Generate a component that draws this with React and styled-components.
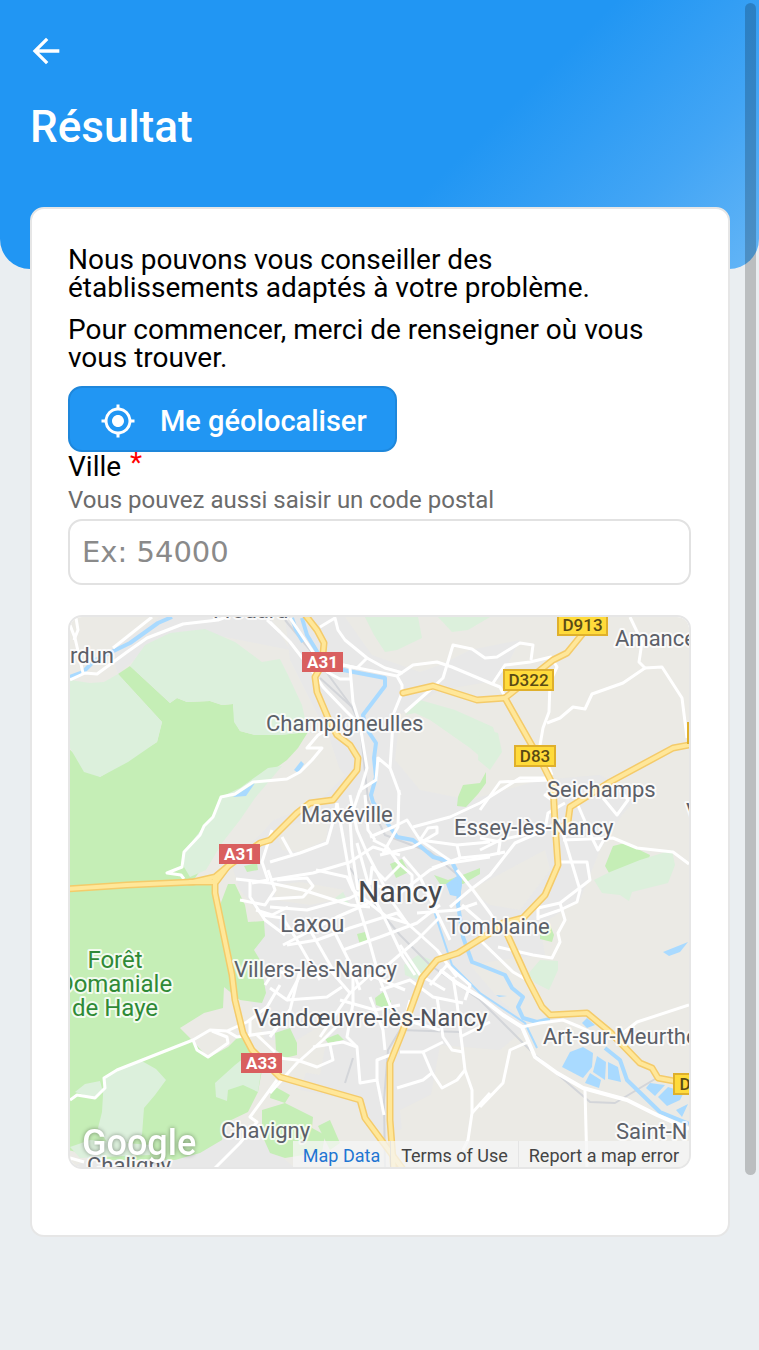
import React, { useState } from "react";
import styled, { createGlobalStyle } from "styled-components";
import { MdArrowBack, MdMyLocation } from "react-icons/md";

const GlobalStyle = createGlobalStyle`
  * {
    box-sizing: border-box;
  }

  body {
    margin: 0;
    min-height: 100vh;
    background: #eaeef1;
    color: #000;
    font-family: Roboto, "Liberation Sans", sans-serif;
    font-size: 28px;
    line-height: 28px;
  }
`;

// Fills, drawn from back to front.
const AREAS = [
  {
    fill: "#e8e8e8",
    shapes: [
      "285,617 345,617 372,655 420,672 440,665 470,650 520,640 500,680 440,690 400,715 395,760 420,790 470,800 540,780 600,775 640,795 622,815 600,850 580,900 540,925 545,955 500,960 470,965 500,1000 530,1025 500,1050 440,1045 430,1100 400,1130 380,1130 350,1100 300,1090 310,1060 290,1040 265,1040 250,1000 255,950 265,920 240,890 230,860 260,835 300,790 340,770 330,740 310,700 290,660",
      "110,650 160,617 270,617 290,650 200,632 140,655 118,674",
      "70,1168 110,1150 250,1130 295,1168",
    ],
  },
  {
    fill: "#ebeae5",
    shapes: [
      "275,830 330,812 326,840 300,852 282,850",
      "470,890 545,850 550,870 520,910 490,905",
      "280,1050 330,1020 320,1075 290,1070",
      "270,780 330,756 345,775 320,800 270,822",
      "275,900 310,905 335,900 345,890 300,882 275,885",
      "400,1110 440,1090 480,1100 460,1150 405,1160",
    ],
  },
  {
    fill: "#c5eeb6",
    shapes: [
      "68,748 100,777 157,742 162,722 118,674 130,666 170,703 177,698 187,702 210,701 222,705 233,704 235,722 240,731 255,735 280,735 308,732 298,748 287,760 276,768 258,777 235,796 215,850 190,885 214,885 220,905 228,884 235,884 245,905 248,922 264,921 265,936 254,950 260,960 266,993 262,1003 240,1000 224,987 223,1008 204,1013 180,1028 193,1041 208,1058 228,1047 240,1035 250,1045 254,1064 262,1070 258,1092 248,1112 225,1123 222,1140 200,1153 175,1160 110,1160 68,1150",
      "262,1110 285,1103 313,1117 312,1128 325,1135 322,1152 285,1158 270,1153 262,1135",
      "318,1126 330,1120 340,1143 330,1150",
      "272,1085 290,1095 285,1103 270,1098",
      "275,1033 290,1028 297,1043 297,1055 285,1058 276,1050",
      "325,1039 338,1034 344,1040 328,1043",
      "375,998 383,992 391,1001 390,1010 376,1005",
      "390,864 402,859 409,872 396,878",
      "434,875 448,880 465,874 480,868 480,874 463,884 440,884",
      "357,934 365,932 368,942 360,945",
      "458,797 463,785 480,783 486,772 486,783 478,794 466,807 457,806",
      "605,866 613,846 625,843 650,855 648,862 633,865 612,878",
      "540,930 550,925 554,935 552,942 540,939",
      "244,866 257,863 258,870 247,872",
    ],
  },
  {
    fill: "#dcf0dc",
    shapes: [
      "70,680 90,683 104,682 118,674 162,722 157,742 128,762 100,777 84,772 70,748",
      "130,666 145,645 170,633 205,629 235,642 262,662 280,659 287,673 302,705 308,732 280,735 255,735 240,731 234,722 233,704 222,705 210,701 187,702 177,698 170,703",
      "184,852 204,826 213,817 221,797 240,788 268,768 282,766 255,798 240,820 222,843 206,870 190,877 184,867",
      "104,1078 140,1060 156,1069 166,1080 155,1095 144,1108 142,1135 112,1150 98,1128 102,1112",
      "75,1092 85,1084 100,1081 103,1092 93,1098",
      "70,1147 90,1140 150,1145 150,1155 80,1158",
      "215,1083 235,1065 245,1057 262,1065 258,1092 243,1085 228,1090 227,1101 216,1097",
      "365,617 418,617 422,638 397,650 385,652 374,635",
      "438,617 490,617 468,630 452,632",
      "405,715 420,700 455,710 493,727 500,750 490,765 470,748 430,720 415,713",
      "480,728 498,733 502,752 490,770 478,760",
      "594,880 610,872 640,860 672,850 675,865 668,883 632,892 629,901 620,895 602,893",
      "528,974 540,960 558,961 558,970 549,990 535,983",
      "404,965 418,955 432,960 422,982 405,975",
      "335,898 343,892 350,905 340,902",
    ],
  },
  {
    fill: "#a9daff",
    shapes: [
      "562,1067 570,1052 583,1047 593,1053 592,1067 583,1078",
      "597,1056 606,1062 605,1080 593,1072",
      "608,1062 618,1067 621,1082 608,1079",
      "590,1073 601,1080 599,1088 585,1083",
      "582,1023 587,1018 595,1025 587,1028",
      "646,1088 650,1083 665,1085 655,1096",
      "658,1097 668,1087 684,1092 680,1100 667,1106",
      "676,1110 688,1104 682,1117",
      "663,952 688,942 680,952 669,956",
      "446,884 460,874 462,885 460,897 450,895",
      "294,770 301,761 304,764 298,773",
      "496,995 507,996 499,997",
      "233,797 255,783 246,796",
    ],
  },
];

const RIVERS = [
  "70,677 83,672 95,660 130,643 158,623 172,617",
  "292,618 296,630 303,642",
  "302,618 307,635 318,653 330,668 343,670 385,678 385,686 363,715 366,728 376,743 374,758 376,777 371,795 373,802 390,827 397,837 413,840 433,857 452,862 460,878 458,905 463,937 472,962 480,965 505,975 512,988 523,997 518,1007 523,1018 537,1022 550,1019",
  "605,1048 620,1060 627,1080 660,1112 689,1124",
];

const CANALS = ["433,908 442,935 452,965 480,993 525,1023 537,1048"];

const RAILS = [
  "285,620 310,650 352,707 360,725 368,800 385,835 430,852 470,885",
  "350,868 375,905 400,935 430,965 480,1000 535,1055 590,1102 615,1103 640,1088 655,1079",
  "320,678 352,707",
  "385,1168 384,1100 388,1050 400,1030 460,1032",
  "345,1083 353,1058",
];

const STREETS = [
  "320,627 335,618 338,630 345,640 367,658 385,668 403,673",
  "270,622 290,642 310,668 323,687 345,710 357,722",
  "290,618 313,652 327,672 340,679 350,679",
  "343,665 397,676 402,685 402,693 393,715 392,738 390,768 400,795",
  "397,676 413,665 437,662 452,667 490,683 500,687 505,697",
  "405,712 430,690 443,678 453,645 472,649 485,658 497,657 520,643 533,645 531,660",
  "350,668 353,702 360,725 367,768 360,792",
  "367,658 357,668 343,665",
  "493,683 505,665 530,662 551,657 557,667 550,682 549,712 543,728 540,745 552,775",
  "630,617 642,642 639,662 645,668 623,683 592,694 585,709 573,707 560,718 547,723",
  "645,668 662,667 682,698 687,738",
  "345,720 318,735 307,748 322,748 312,760 300,772 287,779 253,782 235,794 221,797 213,817 204,826 200,835 184,852 182,867 167,873 181,875 184,879",
  "70,625 75,638 83,673",
  "76,618 78,630 74,640",
  "70,680 85,673 97,674 127,652 147,638 183,624 218,620 240,612",
  "113,648 152,617",
  "267,620 280,632",
  "390,768 378,758 376,780 360,790",
  "282,837 292,855",
  "270,862 300,853 327,843 335,815 337,803",
  "337,803 350,877 367,933 380,980 392,1010",
  "350,795 357,830 367,853 393,903 407,923",
  "360,790 350,820 352,850 358,890",
  "365,795 368,830 375,840",
  "270,880 313,873 350,862 373,847 400,855",
  "236,879 270,883 303,890 350,905 370,907",
  "270,899 303,897 313,886 307,878 277,880",
  "270,907 307,910 350,898 365,890",
  "316,870 347,877 353,890 387,917 407,923 437,950 457,977",
  "262,915 283,918 297,940 320,980",
  "287,945 317,940 350,928 397,913 407,923",
  "283,945 337,917 360,907 385,895",
  "310,930 337,977",
  "330,923 350,963 360,990",
  "357,843 370,890 387,923 403,957 415,975",
  "373,840 387,847 400,865 385,880 372,867 370,885",
  "399,790 398,827 383,853",
  "370,837 393,827 407,820 420,840 457,845 490,842",
  "380,855 413,847 437,833 437,827 428,828 420,840",
  "413,827 450,817 480,803 520,778 552,778",
  "457,845 460,858 490,855 505,852",
  "450,863 490,857",
  "457,870 473,890 490,913 503,933",
  "420,840 452,862",
  "450,907 470,890 490,875 515,843 545,830 560,820",
  "403,857 420,877 437,913 450,940",
  "417,913 457,910 477,903",
  "343,950 380,937 417,923 440,905",
  "370,980 417,940 440,917",
  "400,945 420,975 445,990",
  "375,885 400,893 430,870 450,862",
  "395,860 412,875 412,893",
  "432,868 460,858",
  "462,905 485,925",
  "250,880 250,897 265,920 285,935",
  "252,883 268,880 262,862 272,830",
  "240,900 265,905 275,890 268,870",
  "256,910 272,915 288,907",
  "480,838 500,842 498,855",
  "480,850 500,840 545,830 548,813 565,803",
  "563,840 613,838 637,848 673,852 689,864",
  "562,830 570,857 580,890 577,902 560,910 537,918",
  "560,862 587,862 590,880 560,903 538,908 538,920",
  "577,803 593,840 598,850 605,838",
  "603,798 617,815 628,800 620,790",
  "480,810 500,782 550,780",
  "498,947 533,955 552,958 560,942 558,933 565,920 560,903",
  "480,940 513,972 527,980",
  "552,800 545,795 560,790",
  "270,988 287,1000 303,970",
  "320,1037 350,993 330,970",
  "287,1000 327,997 342,987",
  "300,970 290,1010 270,1037",
  "265,985 275,970 290,975",
  "313,1047 343,1042 357,1047 360,1083 377,1080 384,1115",
  "377,1080 377,1060 390,1055",
  "270,1057 297,1060 317,1067 333,1060 330,1045",
  "270,1093 297,1063 323,1040 353,1010",
  "353,970 353,1003 347,1037 357,1047",
  "370,997 383,1030 385,1050",
  "340,1000 375,1010 400,1005",
  "350,993 370,975 405,990",
  "380,990 410,980 433,997 463,1003",
  "397,1088 423,1080 432,1073 423,1052 400,1052",
  "432,1073 442,1088 457,1080 465,1070",
  "453,977 457,1003 465,1070 472,1090 472,1113 468,1140 463,1150",
  "472,1113 490,1093",
  "437,997 443,1037 452,1050 463,1052",
  "423,1052 443,1042",
  "490,1022 460,1037",
  "410,1000 405,1020 440,1030",
  "430,985 447,965 470,985 465,1000",
  "480,1107 503,1083 510,1050 528,1042",
  "522,1027 540,1023 563,1020 580,1027 593,1033",
  "623,1033 637,1022 689,1005",
  "585,1090 587,1168",
  "70,1100 77,1095 95,1098 105,1088 104,1078 117,1070 193,1040 210,1030 227,1031 247,1022 267,1007 280,985",
  "193,1040 197,1050 208,1057 228,1043 227,1037 212,1031",
  "227,1031 237,1037 273,1032 290,1010",
  "257,1035 275,1052",
  "250,1020 250,1035",
  "277,1080 250,1117 257,1122 240,1143 215,1168",
  "70,1158 84,1162",
];

const MAIN_STREETS = [
  "440,970 457,983 480,997 503,1015 522,1027 535,1057 557,1073 583,1088 627,1100 657,1115 689,1129",
];

const HIGHWAYS = [
  "303,612 317,630 324,643 322,665 315,677 317,692 328,718 337,735 350,745 358,758 357,770 337,795 333,800 310,803 297,813 270,840 260,843 227,867 215,877 193,882 127,885 66,889",
  "190,882 216,882 228,866",
  "215,878 215,893 232,975 235,1000 243,1033 252,1050 280,1077 360,1100 365,1118 405,1172",
  "394,1172 390,1120 390,1063 402,1033 422,978 437,960 458,953 490,933 503,923 523,918 545,895 558,865 555,823 553,785 543,765 505,698 553,660 567,653 580,637 600,612",
  "505,698 477,700 433,686 403,693",
  "694,744 673,748 610,782 570,807 568,822 556,832",
  "503,925 528,980 542,1007 550,1015 587,1013 610,1032 640,1063 652,1068 658,1078 690,1084",
];

const TOWNS = [
  { name: "rdun", x: 70, y: 663 },
  { name: "Frouard", x: 213, y: 618 },
  { name: "Champigneulles", x: 266, y: 731 },
  { name: "Amance", x: 615, y: 646 },
  { name: "Seichamps", x: 547, y: 797 },
  { name: "Maxéville", x: 301, y: 822 },
  { name: "Essey-lès-Nancy", x: 454, y: 835 },
  { name: "V", x: 686, y: 819 },
  { name: "Nancy", x: 358, y: 902, size: 30, color: "#46484d" },
  { name: "Laxou", x: 280, y: 932, size: 24 },
  { name: "Tomblaine", x: 447, y: 934 },
  { name: "Villers-lès-Nancy", x: 234, y: 977 },
  { name: "Vandœuvre-lès-Nancy", x: 254, y: 1026, size: 24, color: "#50535a" },
  { name: "Art-sur-Meurthe", x: 543, y: 1044 },
  { name: "Saint-N", x: 616, y: 1139 },
  { name: "Chavigny", x: 221, y: 1138 },
  { name: "Chaligny", x: 87, y: 1173 },
];

const FOREST_LABEL = [
  { name: "Forêt", y: 968 },
  { name: "Domaniale", y: 992 },
  { name: "de Haye", y: 1016 },
];

const SHIELDS = [
  { name: "A31", x: 302, y: 652, width: 41, kind: "motorway" },
  { name: "A31", x: 219, y: 844, width: 41, kind: "motorway" },
  { name: "A33", x: 241, y: 1053, width: 41, kind: "motorway" },
  { name: "D913", x: 557, y: 614, width: 51 },
  { name: "D322", x: 503, y: 669, width: 51 },
  { name: "D83", x: 514, y: 745, width: 42 },
  { name: "D2", x: 673, y: 1073, width: 34 },
  { name: "", x: 687, y: 722, width: 20 },
];

const Lines = ({ points, ...props }) => (
  <g fill="none" strokeLinejoin="round" {...props}>
    {points.map((line) => (
      <polyline key={line} points={line} />
    ))}
  </g>
);

const Shield = ({ name, x, y, width, kind }) => {
  const isMotorway = kind === "motorway";
  return (
    <g>
      <rect
        x={x + 1}
        y={y + 1}
        width={width - 2}
        height={isMotorway ? 18 : 20}
        fill={isMotorway ? "#d95f5f" : "#ffdb3b"}
        stroke={isMotorway ? "#d95f5f" : "#dfb02c"}
        strokeWidth="2"
      />
      <ShieldText
        x={x + width / 2}
        y={y + (isMotorway ? 16 : 17)}
        $light={isMotorway}
      >
        {name}
      </ShieldText>
    </g>
  );
};

const Map = () => (
  <MapFrame>
    <MapDrawing viewBox="70 617 619 550" role="img" aria-label="Carte de Nancy">
      <rect x="70" y="617" width="620" height="551" fill="#ebeae5" />
      {AREAS.map(({ fill, shapes }) => (
        <g key={fill} fill={fill}>
          {shapes.map((shape) => (
            <polygon key={shape} points={shape} />
          ))}
        </g>
      ))}
      <Lines points={RAILS} stroke="#d3d5d9" strokeWidth="2" />
      <Lines points={RIVERS} stroke="#a9daff" strokeWidth="4" />
      <Lines points={CANALS} stroke="#a9daff" strokeWidth="2" />
      <Lines points={STREETS} stroke="#fff" strokeWidth="3" />
      <Lines points={MAIN_STREETS} stroke="#fff" strokeWidth="4" />
      <Lines points={HIGHWAYS} stroke="#f4cb6a" strokeWidth="7" strokeLinecap="round" />
      <Lines points={HIGHWAYS} stroke="#ffe799" strokeWidth="4" strokeLinecap="round" />
      {SHIELDS.map((shield) => (
        <Shield key={`${shield.x}-${shield.y}`} {...shield} />
      ))}
      {TOWNS.map(({ name, x, y, size, color }) => (
        <PlaceName key={name} x={x} y={y} $size={size} $color={color}>
          {name}
        </PlaceName>
      ))}
      {FOREST_LABEL.map(({ name, y }) => (
        <PlaceName
          key={name}
          x="115"
          y={y}
          textAnchor="middle"
          $size={24}
          $color="#2f8a36"
        >
          {name}
        </PlaceName>
      ))}
      <GoogleMark x="82" y="1155">
        Google
      </GoogleMark>
    </MapDrawing>
    <Attribution>
      <AttributionLink href="#map-data" $active>
        Map Data
      </AttributionLink>
      <AttributionLink href="#terms">Terms of Use</AttributionLink>
      <AttributionLink href="#report">Report a map error</AttributionLink>
    </Attribution>
  </MapFrame>
);

const App = () => {
  const [city, setCity] = useState("");

  return (
    <>
      <GlobalStyle />
      <Header>
        <BackButton type="button" aria-label="Retour">
          <MdArrowBack size={40} />
        </BackButton>
        <Title>Résultat</Title>
      </Header>
      <Card>
        <Paragraph>
          Nous pouvons vous conseiller des établissements adaptés à votre
          problème.
        </Paragraph>
        <Paragraph>
          Pour commencer, merci de renseigner où vous vous trouver.
        </Paragraph>
        <LocateButton type="button">
          <MdMyLocation size={36} />
          Me géolocaliser
        </LocateButton>
        <Label htmlFor="city">
          Ville <Required>*</Required>
        </Label>
        <Hint id="city-hint">Vous pouvez aussi saisir un code postal</Hint>
        <TextInput
          id="city"
          aria-describedby="city-hint"
          placeholder="Ex: 54000"
          value={city}
          onChange={(e) => setCity(e.target.value)}
          required
        />
        <Map />
      </Card>
      <ScrollThumb />
    </>
  );
};

const Header = styled.header`
  padding: 31px 30px 116px;
  border-radius: 0 0 30px 30px;
  background: linear-gradient(135deg, #2196f3 60%, #42a5f5 82%, #64b5f6 100%);
  color: #fff;
`;

const BackButton = styled.button`
  display: flex;
  margin: 0 0 30px -4px;
  padding: 0;
  border: none;
  background: none;
  color: inherit;
  cursor: pointer;
`;

const Title = styled.h1`
  margin: 0;
  font-size: 44px;
  font-weight: 500;
  line-height: 52px;
`;

const Card = styled.main`
  display: flex;
  flex-direction: column;
  align-items: stretch;
  margin: -62px 29px 112px 30px;
  padding: 37px 37px 66px 36px;
  border: 2px solid #e6e6e6;
  border-radius: 14px;
  background: #fff;
`;

const Paragraph = styled.p`
  margin: 0 0 14px;
  padding-right: 8px;
`;

const LocateButton = styled.button`
  display: flex;
  align-items: center;
  align-self: flex-start;
  gap: 24px;
  height: 66px;
  padding: 4px 28px 0 30px;
  border: 2px solid #1e87db;
  border-radius: 14px;
  background: #2196f3;
  color: #fff;
  font: inherit;
  font-size: 29px;
  font-weight: 500;
  cursor: pointer;
`;

const Label = styled.label`
  margin: 1px 0 5px;
`;

const Required = styled.span`
  margin-left: 2px;
  color: #f00;
  line-height: 0;
  vertical-align: 4px;
`;

const Hint = styled.div`
  margin-bottom: 5px;
  color: #6b6b6b;
  font-size: 24px;
`;

const TextInput = styled.input`
  width: 100%;
  height: 66px;
  margin-bottom: 30px;
  padding: 0 12px;
  border: 2px solid #e2e2e2;
  border-radius: 14px;
  background: #fff;
  font-family: "DejaVu Sans", sans-serif;
  font-size: 29px;

  &::placeholder {
    color: #8a8a8a;
  }
`;

const MapFrame = styled.div`
  position: relative;
  overflow: hidden;
  border: 2px solid #e6e6e6;
  border-radius: 14px;
`;

const MapDrawing = styled.svg`
  display: block;
  width: 100%;
  height: auto;
`;

const PlaceName = styled.text`
  fill: ${({ $color }) => $color || "#5c6068"};
  stroke: rgba(255, 255, 255, 0.8);
  stroke-width: 4px;
  stroke-linejoin: round;
  paint-order: stroke;
  font-size: ${({ $size }) => $size || 22}px;
`;

const ShieldText = styled.text`
  fill: ${({ $light }) => ($light ? "#fff" : "#5a4b14")};
  font-size: 17px;
  font-weight: ${({ $light }) => ($light ? 700 : 500)};
  text-anchor: middle;
`;

const GoogleMark = styled.text`
  fill: #fff;
  font-size: 36px;
  font-weight: 500;
  filter: drop-shadow(0 0 2px rgba(0, 0, 0, 0.4));
`;

const Attribution = styled.div`
  position: absolute;
  right: 0;
  bottom: 0;
  display: flex;
`;

const AttributionLink = styled.a`
  padding: 4px 10px 0;
  border-left: 1px solid rgba(220, 220, 220, 0.6);
  background: rgba(245, 245, 245, 0.75);
  color: ${({ $active }) => ($active ? "#1f76d2" : "#444")};
  font-size: 18px;
  line-height: 22px;
  text-decoration: none;

  &:first-child {
    border-left: none;
  }
`;

const ScrollThumb = styled.div`
  position: fixed;
  top: 3px;
  right: 3px;
  bottom: 175px;
  width: 11px;
  border-radius: 6px;
  background: rgba(0, 0, 0, 0.2);
`;

export default App;
